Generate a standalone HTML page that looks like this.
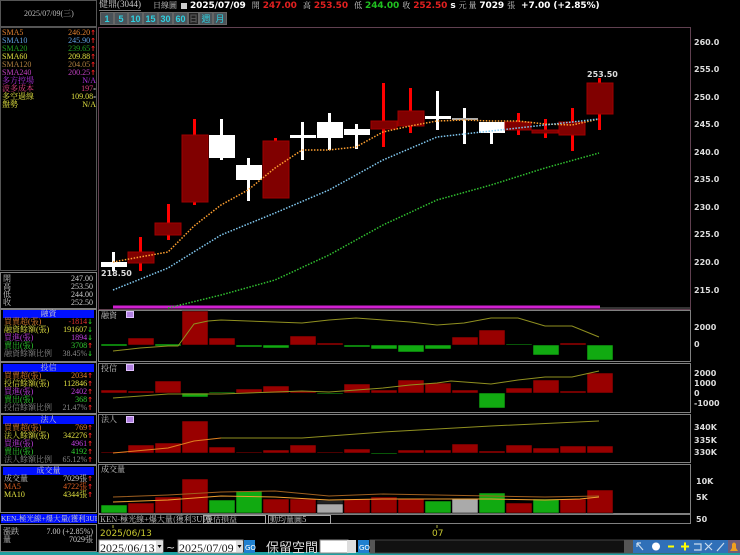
<!DOCTYPE html>
<html><head><meta charset="utf-8"><style>
*{margin:0;padding:0;box-sizing:border-box}
body{width:740px;height:555px;background:#000;overflow:hidden;position:relative;font-family:"Liberation Sans","Noto Sans CJK TC",sans-serif;color:#ddd}
.a{position:absolute;white-space:nowrap}
.s{font-family:"Liberation Serif","Noto Serif CJK SC",serif;font-size:8px;line-height:8px}
.s b{font-family:"DejaVu Sans",sans-serif;font-size:7px}
.box{position:absolute;border:1px solid #808080}
.hd{position:absolute;left:3px;width:91px;height:8px;background:#0010ff;color:#ccc;text-align:center;font-size:8px;line-height:8px;font-family:"Liberation Serif","Noto Serif CJK SC",serif}
.r{position:absolute;left:4px;width:89px;height:8px}
.r span{position:absolute;right:0}
.btn{position:absolute;top:12px;height:13px;background:#4a5258;color:#2fd0e0;font-size:9px;font-weight:bold;text-align:center;line-height:13px;border:1px solid #666}
</style></head><body>

<div class="box" style="left:0;top:0;width:97px;height:27px;border-color:#555"></div>
<div class="a s" style="left:24px;top:10px;color:#bbb">2025/07/09(三)</div>
<div class="box" style="left:0;top:27px;width:97px;height:244px;border-color:#555"></div>
<div class="a s" style="left:2px;top:29px;width:94px;line-height:8px">
<div style="color:#e08030;position:relative">SMA5<span style="position:absolute;right:0">246.20<b style="color:#f22">↑</b></span></div>
<div style="color:#60a0e0;position:relative">SMA10<span style="position:absolute;right:0">245.90<b style="color:#f22">↑</b></span></div>
<div style="color:#20a020;position:relative">SMA20<span style="position:absolute;right:0">239.65<b style="color:#f22">↑</b></span></div>
<div style="color:#e0e040;position:relative">SMA60<span style="position:absolute;right:0">209.88<b style="color:#f22">↑</b></span></div>
<div style="color:#b08040;position:relative">SMA120<span style="position:absolute;right:0">204.05<b style="color:#f22">↑</b></span></div>
<div style="color:#c040c0;position:relative">SMA240<span style="position:absolute;right:0">200.25<b style="color:#f22">↑</b></span></div>
<div style="color:#b030e0;position:relative">多方控場<span style="position:absolute;right:0">N/A</span></div>
<div style="color:#e04080;position:relative">波多成本<span style="position:absolute;right:0">197<b style="color:#ddd">-</b></span></div>
<div style="color:#e0e040;position:relative">多空過線<span style="position:absolute;right:0">109.08<b style="color:#ddd">-</b></span></div>
<div style="color:#e0e040;position:relative">盤勢<span style="position:absolute;right:0">N/A</span></div>
</div>

<div class="box" style="left:0;top:272px;width:97px;height:37px"></div>
<div class="a s" style="left:3px;top:275px;width:90px;color:#ccc">
<div style="position:relative">開<span style="position:absolute;right:0">247.00</span></div>
<div style="position:relative">高<span style="position:absolute;right:0">253.50</span></div>
<div style="position:relative">低<span style="position:absolute;right:0">244.00</span></div>
<div style="position:relative">收<span style="position:absolute;right:0">252.50</span></div>
</div>

<div class="box" style="left:0;top:309px;width:97px;height:53px"></div>
<div class="hd" style="top:310px">融資</div>
<div class="s" style="position:absolute;left:0;top:318px;width:97px">
<div class="r" style="top:0;color:#e08030">買賣超(張)<span style="color:#e03030">-1814<b style="color:#2c2">↓</b></span></div>
<div class="r" style="top:8px;color:#e0e040">融資餘額(張)<span>191607<b style="color:#2c2">↓</b></span></div>
<div class="r" style="top:16px;color:#c040e0">買進(張)<span>1894<b style="color:#2c2">↓</b></span></div>
<div class="r" style="top:24px;color:#30d030">賣出(張)<span>3708<b style="color:#f22">↑</b></span></div>
<div class="r" style="top:32px;color:#888">融資餘額比例<span>38.45%<b style="color:#2c2">↓</b></span></div>
</div>
<div class="box" style="left:0;top:362px;width:97px;height:52px"></div>
<div class="hd" style="top:364px">投信</div>
<div class="s" style="position:absolute;left:0;top:372px;width:97px">
<div class="r" style="top:0;color:#e08030">買賣超(張)<span>2034<b style="color:#f22">↑</b></span></div>
<div class="r" style="top:8px;color:#e0e040">投信餘額(張)<span>112846<b style="color:#f22">↑</b></span></div>
<div class="r" style="top:16px;color:#c040e0">買進(張)<span>2402<b style="color:#f22">↑</b></span></div>
<div class="r" style="top:24px;color:#30d030">賣出(張)<span>368<b style="color:#f22">↑</b></span></div>
<div class="r" style="top:32px;color:#888">投信餘額比例<span>21.47%<b style="color:#f22">↑</b></span></div>
</div>
<div class="box" style="left:0;top:414px;width:97px;height:51px"></div>
<div class="hd" style="top:416px">法人</div>
<div class="s" style="position:absolute;left:0;top:424px;width:97px">
<div class="r" style="top:0;color:#e08030">買賣超(張)<span>769<b style="color:#f22">↑</b></span></div>
<div class="r" style="top:8px;color:#e0e040">法人餘額(張)<span>342276<b style="color:#f22">↑</b></span></div>
<div class="r" style="top:16px;color:#c040e0">買進(張)<span>4961<b style="color:#f22">↑</b></span></div>
<div class="r" style="top:24px;color:#30d030">賣出(張)<span>4192<b style="color:#f22">↑</b></span></div>
<div class="r" style="top:32px;color:#888">法人餘額比例<span>65.12%<b style="color:#f22">↑</b></span></div>
</div>
<div class="box" style="left:0;top:465px;width:97px;height:48px"></div>
<div class="hd" style="top:467px">成交量</div>
<div class="s" style="position:absolute;left:0;top:475px;width:97px">
<div class="r" style="top:0;color:#ccc">成交量<span>7029張<b style="color:#f22">↑</b></span></div>
<div class="r" style="top:8px;color:#e06020">MA5<span>4722張<b style="color:#f22">↑</b></span></div>
<div class="r" style="top:16px;color:#e0e040">MA10<span>4344張<b style="color:#f22">↑</b></span></div>
</div>
<div class="a s" style="left:1px;top:514px;width:96px;height:9px;background:#0010ff;color:#ccc;line-height:9px;overflow:hidden;font-size:7.5px">KEN-極光線+爆大量(獲利3UP)</div>
<div class="box" style="left:0;top:524px;width:97px;height:28px"></div>
<div class="a s" style="left:3px;top:528px;width:90px;color:#ccc">
<div style="position:relative">漲跌<span style="position:absolute;right:0">7.00 (+2.85%)</span></div>
<div style="position:relative">量<span style="position:absolute;right:0">7029張</span></div>
</div>

<div class="a s" style="left:99px;top:0px;color:#ccc;border-bottom:1px solid #777;padding-bottom:1px;font-size:9px;line-height:9px">健鼎(3044)</div>
<div class="a s" style="left:153px;top:2px;color:#ccc">日線圖</div>
<div class="a" style="left:181px;top:3px;width:6px;height:6px;background:#ccc"></div>
<div class="a" style="left:190px;top:0;font-size:9px;font-weight:bold;color:#fff;font-family:'DejaVu Sans',sans-serif;line-height:12px;letter-spacing:-0.1px">2025/07/09 &nbsp;<span class="s" style="font-weight:normal;color:#ccc">開</span> <span style="color:#e02020">247.00</span> &nbsp;<span class="s" style="font-weight:normal;color:#ccc">高</span> <span style="color:#e02020">253.50</span> &nbsp;<span class="s" style="font-weight:normal;color:#ccc">低</span> <span style="color:#20c020">244.00</span> <span class="s" style="font-weight:normal;color:#ccc">收</span> <span style="color:#e02020">252.50</span> s <span class="s" style="font-weight:normal;color:#ccc">元 量</span> 7029 <span class="s" style="font-weight:normal;color:#ccc">張</span> &nbsp;+7.00 (+2.85%)</div>
<div class="btn" style="left:100px;width:14px">1</div>
<div class="btn" style="left:114px;width:14px">5</div>
<div class="btn" style="left:128px;width:15px">10</div>
<div class="btn" style="left:143px;width:15px">15</div>
<div class="btn" style="left:158px;width:15px">30</div>
<div class="btn" style="left:173px;width:15px">60</div>
<div class="btn" style="left:188px;width:11px;background:#222;color:#555">日</div>
<div class="btn" style="left:199px;width:14px;font-weight:normal">週</div>
<div class="btn" style="left:213px;width:14px;font-weight:normal">月</div>

<svg class="a" style="left:0;top:0" width="740" height="555" xmlns="http://www.w3.org/2000/svg" font-family="DejaVu Sans,sans-serif">
<rect x="98.5" y="27.5" width="592" height="282" fill="none" stroke="#604050"/>
<line x1="113" y1="307" x2="600" y2="307" stroke="#d020d0" stroke-width="3"/>
<line x1="600" y1="308" x2="690" y2="308" stroke="#666" stroke-width="1"/>
<g font-size="8" fill="#ddd" font-weight="bold">
<text x="694" y="45">260.0</text><text x="694" y="72">255.0</text><text x="694" y="100">250.0</text><text x="694" y="127">245.0</text><text x="694" y="155">240.0</text><text x="694" y="182">235.0</text><text x="694" y="210">230.0</text><text x="694" y="237">225.0</text><text x="694" y="265">220.0</text><text x="694" y="293">215.0</text>
<text x="101" y="276">218.50</text><text x="587" y="77">253.50</text>
</g>
<g>
<rect x="112" y="252" width="3" height="19" fill="#fff"/><rect x="101" y="262" width="26" height="5" fill="#fff"/>
<rect x="139" y="237" width="3" height="34" fill="#f00"/><rect x="128" y="252" width="26" height="11" fill="#800000" stroke="#a00000"/>
<rect x="167" y="204" width="3" height="36" fill="#f00"/><rect x="155" y="223" width="26" height="12" fill="#800000" stroke="#a00000"/>
<rect x="193" y="119" width="3" height="86" fill="#f00"/><rect x="182" y="135" width="26" height="67" fill="#800000" stroke="#a00000"/>
<rect x="220" y="119" width="3" height="41" fill="#fff"/><rect x="209" y="135" width="26" height="23" fill="#fff"/>
<rect x="247" y="158" width="3" height="43" fill="#fff"/><rect x="236" y="165" width="26" height="15" fill="#fff"/>
<rect x="274" y="138" width="3" height="8" fill="#f00"/><rect x="263" y="141" width="26" height="57" fill="#800000" stroke="#a00000"/>
<rect x="301" y="122" width="3" height="38" fill="#fff"/><rect x="290" y="135" width="26" height="3" fill="#fff"/>
<rect x="328" y="113" width="3" height="37" fill="#fff"/><rect x="317" y="122" width="26" height="16" fill="#fff"/>
<rect x="355" y="124" width="3" height="25" fill="#fff"/><rect x="344" y="129" width="26" height="6" fill="#fff"/>
<rect x="382" y="83" width="3" height="64" fill="#f00"/><rect x="371" y="121" width="26" height="8" fill="#800000" stroke="#a00000"/>
<rect x="409" y="88" width="3" height="45" fill="#f00"/><rect x="398" y="111" width="26" height="15" fill="#800000" stroke="#a00000"/>
<rect x="436" y="91" width="3" height="39" fill="#fff"/><rect x="425" y="116" width="26" height="3" fill="#fff"/>
<rect x="463" y="108" width="3" height="36" fill="#fff"/><rect x="452" y="118" width="26" height="2" fill="#aaa"/>
<rect x="490" y="122" width="3" height="22" fill="#fff"/><rect x="479" y="122" width="26" height="11" fill="#fff"/>
<rect x="517" y="113" width="3" height="22" fill="#f00"/><rect x="505" y="122" width="26" height="8" fill="#800000" stroke="#a00000"/>
<rect x="544" y="119" width="3" height="19" fill="#f00"/><rect x="532" y="130" width="26" height="3" fill="#800000" stroke="#a00000"/>
<rect x="571" y="108" width="3" height="43" fill="#f00"/><rect x="559" y="122" width="26" height="13" fill="#800000" stroke="#a00000"/>
<rect x="598" y="78" width="3" height="52" fill="#f00"/><rect x="587" y="83" width="26" height="31" fill="#800000" stroke="#a00000"/>
</g>
<polyline fill="none" stroke="#ffa030" stroke-width="1.5" stroke-dasharray="1.5,1.5" points="113,262 140,257 168,252 194,226 221,205 248,190 275,168 302,150 329,150 356,147 383,132 410,126 437,121 464,120 491,121 518,121 545,124 572,125 599,119"/>
<polyline fill="none" stroke="#80c8f0" stroke-width="1.5" stroke-dasharray="1.5,1.5" points="113,290 168,268 221,235 275,213 329,190 383,160 437,137 464,134 518,128 572,122 599,119"/>
<polyline fill="none" stroke="#30c030" stroke-width="1.5" stroke-dasharray="1.5,1.5" points="168,308 221,295 275,280 329,255 383,225 437,200 491,185 545,168 599,153"/>

<g fill="none" stroke="#808080">
<rect x="98.5" y="310.5" width="592" height="51"/>
<rect x="98.5" y="363.5" width="592" height="49"/>
<rect x="98.5" y="414.5" width="592" height="48"/>
<rect x="98.5" y="464.5" width="592" height="49"/>
<rect x="98.5" y="514.5" width="592" height="9"/>
</g>
<g font-size="8" fill="#ccc" font-family="Noto Serif CJK SC,serif">
<text x="101" y="318">融資</text><text x="101" y="371">投信</text><text x="101" y="422">法人</text><text x="101" y="472">成交量</text>
<text x="100" y="522">KEN-極光線+爆大量(獲利3UP)</text><text x="205" y="522">疊估損益</text><text x="270" y="522">動均量圖5</text>
</g>
<g fill="#b080e0" stroke="#e0c0ff"><rect x="126.5" y="311.5" width="7" height="6"/><rect x="126.5" y="364.5" width="7" height="6"/><rect x="126.5" y="416.5" width="7" height="6"/></g>
<g fill="none" stroke="#aaa"><rect x="203.5" y="515.5" width="62" height="8"/><rect x="268.5" y="515.5" width="62" height="8"/></g>
<g fill="#ddd" font-size="8" font-weight="bold">
<text x="694" y="330">2000</text><text x="694" y="347">0</text>
<text x="694" y="376">2000</text><text x="694" y="386">1000</text><text x="694" y="396">0</text><text x="694" y="406">-1000</text>
<text x="694" y="430">340K</text><text x="694" y="443">335K</text><text x="694" y="455">330K</text>
<text x="696" y="484">10K</text><text x="696" y="500">5K</text><text x="696" y="522">50</text>
</g>
<g stroke="#000" stroke-width="0.5">
<rect x="101" y="344" width="26" height="2" fill="#1a1"/>
<rect x="128" y="338" width="26" height="7" fill="#900"/>
<rect x="155" y="344" width="26" height="2" fill="#1a1"/>
<rect x="182" y="311" width="26" height="34" fill="#900"/>
<rect x="209" y="338" width="26" height="7" fill="#900"/>
<rect x="236" y="345" width="26" height="2" fill="#1a1"/>
<rect x="263" y="345" width="26" height="3" fill="#1a1"/>
<rect x="290" y="336" width="26" height="9" fill="#900"/>
<rect x="317" y="343" width="26" height="2" fill="#900"/>
<rect x="344" y="345" width="26" height="2" fill="#1a1"/>
<rect x="371" y="345" width="26" height="4" fill="#1a1"/>
<rect x="398" y="345" width="26" height="7" fill="#1a1"/>
<rect x="425" y="345" width="26" height="4" fill="#1a1"/>
<rect x="452" y="337" width="26" height="8" fill="#900"/>
<rect x="479" y="330" width="26" height="15" fill="#900"/>
<rect x="506" y="344" width="26" height="1" fill="#1a1"/>
<rect x="533" y="345" width="26" height="10" fill="#1a1"/>
<rect x="560" y="343" width="26" height="2" fill="#900"/>
<rect x="587" y="345" width="26" height="15" fill="#1a1"/>
</g>
<polyline fill="none" stroke="#909020" points="113,351 140,348 168,346 178,346 194,324 208,321 221,320 248,321 275,322 302,323 329,320 356,318 383,320 410,322 437,325 464,323 491,318 518,318 545,326 572,326 599,337"/>
<g stroke="#000" stroke-width="0.5">
<rect x="101" y="390" width="26" height="3" fill="#900"/>
<rect x="128" y="391" width="26" height="2" fill="#900"/>
<rect x="155" y="381" width="26" height="12" fill="#900"/>
<rect x="182" y="393" width="26" height="4" fill="#1a1"/>
<rect x="209" y="392" width="26" height="1" fill="#1a1"/>
<rect x="236" y="389" width="26" height="4" fill="#900"/>
<rect x="263" y="386" width="26" height="7" fill="#900"/>
<rect x="290" y="391" width="26" height="2" fill="#900"/>
<rect x="317" y="393" width="26" height="1" fill="#1a1"/>
<rect x="344" y="384" width="26" height="9" fill="#900"/>
<rect x="371" y="390" width="26" height="3" fill="#900"/>
<rect x="398" y="380" width="26" height="13" fill="#900"/>
<rect x="425" y="383" width="26" height="10" fill="#900"/>
<rect x="452" y="390" width="26" height="3" fill="#900"/>
<rect x="479" y="393" width="26" height="15" fill="#1a1"/>
<rect x="506" y="388" width="26" height="5" fill="#900"/>
<rect x="533" y="380" width="26" height="13" fill="#900"/>
<rect x="560" y="391" width="26" height="2" fill="#900"/>
<rect x="587" y="373" width="26" height="20" fill="#900"/>
</g>
<polyline fill="none" stroke="#909020" points="113,398 168,394 221,394 275,392 302,391 329,392 383,388 410,385 437,383 451,381 478,383 491,384 518,380 545,377 572,377 599,371"/>
<g stroke="#000" stroke-width="0.5">
<rect x="101" y="452" width="26" height="1" fill="#900"/>
<rect x="128" y="445" width="26" height="8" fill="#900"/>
<rect x="155" y="443" width="26" height="10" fill="#900"/>
<rect x="182" y="421" width="26" height="32" fill="#900"/>
<rect x="209" y="447" width="26" height="6" fill="#900"/>
<rect x="236" y="452" width="26" height="1" fill="#900"/>
<rect x="263" y="450" width="26" height="3" fill="#900"/>
<rect x="290" y="445" width="26" height="8" fill="#900"/>
<rect x="317" y="452" width="26" height="1" fill="#900"/>
<rect x="344" y="449" width="26" height="4" fill="#900"/>
<rect x="371" y="453" width="26" height="1" fill="#1a1"/>
<rect x="398" y="450" width="26" height="3" fill="#900"/>
<rect x="425" y="450" width="26" height="3" fill="#900"/>
<rect x="452" y="444" width="26" height="9" fill="#900"/>
<rect x="479" y="451" width="26" height="2" fill="#900"/>
<rect x="506" y="445" width="26" height="8" fill="#900"/>
<rect x="533" y="448" width="26" height="5" fill="#900"/>
<rect x="560" y="446" width="26" height="7" fill="#900"/>
<rect x="587" y="446" width="26" height="7" fill="#900"/>
</g>
<polyline fill="none" stroke="#e08020" points="113,453 168,448 194,441 221,438"/>
<polyline fill="none" stroke="#909020" points="221,438 302,438 383,432 491,426 599,421"/>
<g stroke="#000" stroke-width="0.5">
<rect x="101" y="505" width="26" height="8" fill="#1a1"/>
<rect x="128" y="503" width="26" height="10" fill="#900"/>
<rect x="155" y="497" width="26" height="16" fill="#900"/>
<rect x="182" y="479" width="26" height="34" fill="#900"/>
<rect x="209" y="500" width="26" height="13" fill="#1a1"/>
<rect x="236" y="491" width="26" height="22" fill="#1a1"/>
<rect x="263" y="499" width="26" height="14" fill="#900"/>
<rect x="290" y="499" width="26" height="14" fill="#900"/>
<rect x="317" y="500" width="26" height="13" fill="#222"/>
<rect x="317" y="504" width="26" height="9" fill="#aaa"/>
<rect x="344" y="499" width="26" height="14" fill="#900"/>
<rect x="371" y="497" width="26" height="16" fill="#900"/>
<rect x="398" y="499" width="26" height="14" fill="#900"/>
<rect x="425" y="501" width="26" height="12" fill="#1a1"/>
<rect x="452" y="499" width="26" height="14" fill="#aaa"/>
<rect x="479" y="493" width="26" height="20" fill="#1a1"/>
<rect x="506" y="503" width="26" height="10" fill="#900"/>
<rect x="533" y="499" width="26" height="14" fill="#1a1"/>
<rect x="560" y="499" width="26" height="14" fill="#900"/>
<rect x="587" y="490" width="26" height="23" fill="#900"/>
</g>
<polyline fill="none" stroke="#a06020" points="113,497 168,495 221,492 275,491 329,496 383,494 437,495 491,496 545,497 599,496"/>
<polyline fill="none" stroke="#f0a030" points="113,502 168,500 221,496 275,497 329,500 383,499 437,499 491,499 545,500 580,499 599,497"/>

<line x1="113" y1="525" x2="113" y2="528" stroke="#b0b040"/>
<line x1="437" y1="525" x2="437" y2="528" stroke="#b0b040"/>
<g fill="#c8c830" font-size="9"><text x="100" y="536">2025/06/13</text><text x="432" y="536">07</text></g>

<rect x="0" y="552" width="740" height="3" fill="#20a0a0"/>
<rect x="99" y="540" width="64" height="13" fill="#fff" stroke="#888"/>
<rect x="178" y="540" width="65" height="13" fill="#fff" stroke="#888"/>
<rect x="156" y="541" width="7" height="11" fill="#ddd"/><rect x="236" y="541" width="7" height="11" fill="#ddd"/>
<path d="M157.5 545 L161.5 545 L159.5 548Z M237.5 545 L241.5 545 L239.5 548Z" fill="#000"/>
<g font-family="Liberation Serif,serif" font-size="12" fill="#222"><text x="100" y="552">2025/06/13</text><text x="179" y="552">2025/07/09</text><text x="322" y="552">3</text></g>
<text x="166" y="551" fill="#ddd" font-size="11">~</text>
<rect x="244" y="540" width="11" height="13" fill="#2080d0"/><text x="245" y="550" font-size="7" fill="#fff">GO</text>
<text x="266" y="552" fill="#ddd" font-size="13" font-family="Noto Sans CJK TC,sans-serif">保留空間</text>
<rect x="320" y="540" width="28" height="13" fill="#fff" stroke="#888"/>
<rect x="347" y="540" width="9" height="13" fill="#ddd"/>
<rect x="358" y="540" width="11" height="13" fill="#2080d0"/><text x="359" y="550" font-size="7" fill="#fff">GO</text>
<rect x="370" y="540" width="330" height="13" fill="#111" stroke="#444"/>
<rect x="370" y="540" width="5" height="13" fill="#555"/><rect x="624" y="540" width="9" height="13" fill="#555"/>
<rect x="633" y="540" width="107" height="13" fill="#3070b8"/>
<g fill="none" stroke="#cde" stroke-width="1.2">
<path d="M637 543 L643 550 M637 543 L641 543 M637 543 L637 547"/>
<circle cx="656" cy="546.5" r="4" fill="#fff" stroke="none"/>
<path d="M668 546.5 L674 546.5" stroke="#ff0" stroke-width="2"/>
<path d="M681 546.5 L689 546.5 M685 542.5 L685 550.5" stroke="#ff0" stroke-width="2"/>
<path d="M694 544 L701 544 L701 550 L694 550"/>
<path d="M705 543 L712 550 M712 543 L705 550"/>
<path d="M717 551 L724 543"/>
</g>
<rect x="728" y="540" width="12" height="13" fill="#d04020" opacity="0.4"/>
<path d="M730 551 L738 551 L736 548 L736 544 Q734 541 732 544 L732 548Z" fill="#f0a020"/>
</svg>
</body></html>
